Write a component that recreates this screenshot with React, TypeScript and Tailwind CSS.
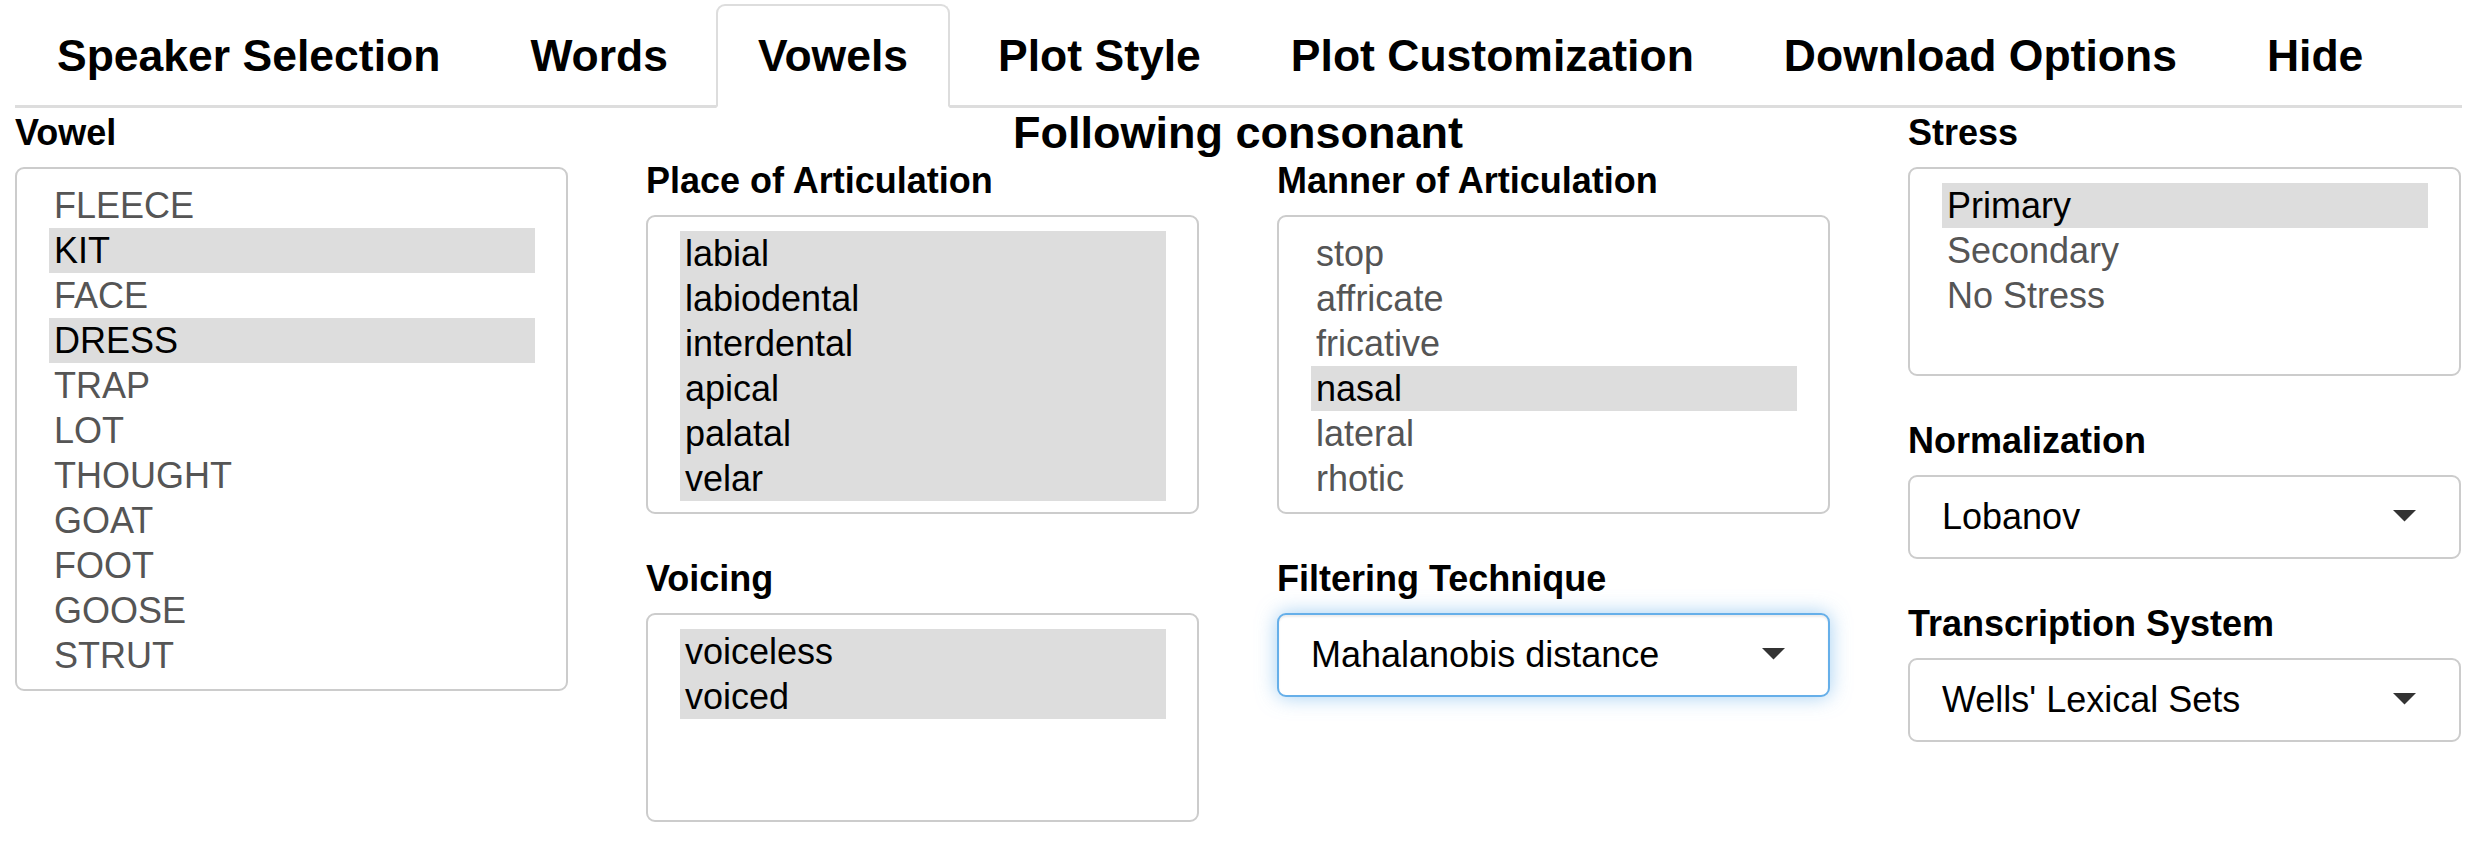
import React from 'react';

const FONT = { fontFamily: '"Liberation Sans", Arial, Helvetica, sans-serif' };

interface Option {
    label: string;
    selected?: boolean;
}

const TABS = ['Speaker Selection', 'Words', 'Vowels', 'Plot Style', 'Plot Customization', 'Download Options', 'Hide'];

const opts = (labels: string[], selected: string[]): Option[] =>
    labels.map((label) => ({ label, selected: selected.includes(label) }));

const VOWELS = opts(
    ['FLEECE', 'KIT', 'FACE', 'DRESS', 'TRAP', 'LOT', 'THOUGHT', 'GOAT', 'FOOT', 'GOOSE', 'STRUT'],
    ['KIT', 'DRESS']
);
const PLACES = opts(
    ['labial', 'labiodental', 'interdental', 'apical', 'palatal', 'velar'],
    ['labial', 'labiodental', 'interdental', 'apical', 'palatal', 'velar']
);
const MANNERS = opts(['stop', 'affricate', 'fricative', 'nasal', 'lateral', 'rhotic'], ['nasal']);
const VOICING = opts(['voiceless', 'voiced'], ['voiceless', 'voiced']);
const STRESS = opts(['Primary', 'Secondary', 'No Stress'], ['Primary']);

function Field({ label, children }: { label: string; children: React.ReactNode }) {
    return (
        <div className="mb-[43px]">
            <div className="text-[36px] font-bold leading-[44px] mb-[12px] text-black">{label}</div>
            {children}
        </div>
    );
}

function ListBox({ items, heightClass = '' }: { items: Option[]; heightClass?: string }) {
    return (
        <div className="border-2 border-[#ccc] rounded-[9px] bg-white pt-[14px] pb-[11px] pl-[32px] pr-[31px]">
            <div className={heightClass}>
                {items.map((item) => (
                    <div
                        key={item.label}
                        className={`h-[45px] leading-[45px] pl-[5px] text-[36px] whitespace-nowrap ${
                            item.selected ? 'bg-[#ddd] text-black' : 'text-[#555]'
                        }`}
                    >
                        {item.label}
                    </div>
                ))}
            </div>
        </div>
    );
}

function SelectBox({ value, focused = false }: { value: string; focused?: boolean }) {
    return (
        <div
            className={`h-[84px] border-2 rounded-[9px] bg-white flex items-center justify-between pl-[32px] pr-[43px] ${
                focused
                    ? 'border-[#66afe9] shadow-[inset_0_2px_2px_rgba(0,0,0,0.075),0_0_20px_rgba(102,175,233,0.6)]'
                    : 'border-[#ccc]'
            }`}
        >
            <span className="text-[36px] leading-[45px] text-black whitespace-nowrap">{value}</span>
            <svg width="23" height="12" viewBox="0 0 23 12" className="-mt-[2px]">
                <polygon points="0,0 23,0 11.5,11.5" fill="#333" />
            </svg>
        </div>
    );
}

export default function App() {
    return (
        <div className="min-h-screen bg-white text-black" style={FONT}>
            <div className="ml-[15px] w-[2447px]">
                {/* Tabs */}
                <nav className="flex pt-[4px] border-b-[3px] border-[#ddd]">
                    {TABS.map((tab) => {
                        const active = tab === 'Vowels';
                        return (
                            <div
                                key={tab}
                                className={`-mb-[3px] mr-[6px] px-[40px] pt-[25px] pb-[25px] border-2 rounded-t-[9px] text-[44.5px] font-bold leading-[50px] whitespace-nowrap ${
                                    active ? 'border-[#ddd] border-b-white bg-white' : 'border-transparent'
                                }`}
                            >
                                {tab}
                            </div>
                        );
                    })}
                </nav>

                {/* Vowels tab content */}
                <div className="flex gap-[78px]">
                    <div className="w-[553px] pt-[2.5px]">
                        <Field label="Vowel">
                            <ListBox items={VOWELS} />
                        </Field>
                    </div>

                    <div className="w-[1184px]">
                        <h3 className="text-[45px] font-bold leading-[50px] mb-[0.5px] text-center">
                            Following consonant
                        </h3>
                        <div className="grid grid-cols-2 gap-x-[78px]">
                            <Field label="Place of Articulation">
                                <ListBox items={PLACES} />
                            </Field>
                            <Field label="Manner of Articulation">
                                <ListBox items={MANNERS} />
                            </Field>
                            <Field label="Voicing">
                                <ListBox items={VOICING} heightClass="h-[180px]" />
                            </Field>
                            <Field label="Filtering Technique">
                                <SelectBox value="Mahalanobis distance" focused />
                            </Field>
                        </div>
                    </div>

                    <div className="w-[553px] pt-[2.5px]">
                        <Field label="Stress">
                            <ListBox items={STRESS} heightClass="h-[180px]" />
                        </Field>
                        <Field label="Normalization">
                            <SelectBox value="Lobanov" />
                        </Field>
                        <Field label="Transcription System">
                            <SelectBox value="Wells' Lexical Sets" />
                        </Field>
                    </div>
                </div>
            </div>
        </div>
    );
}
